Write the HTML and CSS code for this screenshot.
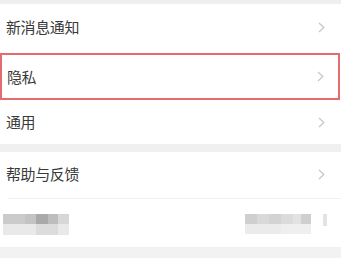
FILE: index.html
```html
<!DOCTYPE html>
<html lang="zh">
<head>
<meta charset="utf-8">
<link rel="stylesheet" href="styles.css">
</head>
<body>
<div class="page">
  <div class="gap-top"></div>
  <div class="row r1"><span class="label">新消息通知</span><svg class="chev" width="7" height="11" viewBox="0 0 7 11"><path d="M1 1 L5.8 5.5 L1 10" fill="none" stroke="#c6c6c6" stroke-width="1.2"/></svg></div>
  <div class="row r2 hl"><span class="label">隐私</span><svg class="chev" width="7" height="11" viewBox="0 0 7 11"><path d="M1 1 L5.8 5.5 L1 10" fill="none" stroke="#c6c6c6" stroke-width="1.2"/></svg></div>
  <div class="row r3"><span class="label">通用</span><svg class="chev" width="7" height="11" viewBox="0 0 7 11"><path d="M1 1 L5.8 5.5 L1 10" fill="none" stroke="#c6c6c6" stroke-width="1.2"/></svg></div>
  <div class="gap-mid"></div>
  <div class="row r4"><span class="label">帮助与反馈</span><svg class="chev" width="7" height="11" viewBox="0 0 7 11"><path d="M1 1 L5.8 5.5 L1 10" fill="none" stroke="#c6c6c6" stroke-width="1.2"/></svg></div>
  <div class="divider"></div>
  <div class="row r5">
    <div class="mosaic left">
      <div class="mrow">
        <i class="c w22 g1"></i><i class="c w11 g2"></i><i class="c w12 g3"></i><i class="c w10 g4"></i><i class="c w11 g5"></i>
      </div>
      <div class="mrow">
        <i class="c w33 l1"></i><i class="c w22 l2"></i><i class="c w11 l1"></i>
      </div>
    </div>
    <div class="right-group">
      <div class="mosaic right">
        <div class="mrow">
          <i class="c w12 g6"></i><i class="c w12 g7"></i><i class="c w12 g8"></i><i class="c w12 g9"></i><i class="c w8 g10"></i><i class="c w10 g6"></i>
        </div>
        <div class="mrow">
          <i class="c w36 l3"></i><i class="c w30 l4"></i>
        </div>
      </div>
      <div class="mini"></div>
    </div>
  </div>
  <div class="gap-bottom"></div>
</div>
</body>
</html>
```
FILE: styles.css
```css
html, body {
  margin: 0;
  padding: 0;
  background: #ffffff;
}
.page {
  width: 341px;
  height: 268px;
  overflow: hidden;
  font-family: "Noto Sans CJK SC", "Noto Sans", sans-serif;
  color: #3a3a3a;
}
.gap-top {
  height: 4px;
  background: #efefef;
}
.row {
  display: flex;
  align-items: center;
  justify-content: space-between;
  padding: 0 16px 0 6px;
  box-sizing: border-box;
  background: #fff;
}
.label {
  font-size: 15px;
  line-height: 18px;
  letter-spacing: -0.4px;
}
.chev {
  display: block;
}
.r1 { height: 48px; padding-bottom: 2px; }
.r2 { height: 47px; margin-top: 1px; }
.row.hl {
  border: 2px solid #e46c6c;
  margin-left: 0;
  margin-right: 1px;
  padding-left: 5px;
  padding-right: 14px;
}
.r3 { height: 44px; }
.gap-mid {
  height: 8px;
  background: #f0f0f0;
}
.r4 { height: 46px; padding-bottom: 2px; }
.divider {
  height: 1px;
  margin-left: 8px;
  background: #f0f0f0;
}
.r5 {
  height: 48px;
  padding: 0 14px 0 3px;
  align-items: flex-start;
  padding-top: 15px;
}
.mosaic {
  display: flex;
  flex-direction: column;
}
.mrow {
  display: flex;
  height: 10px;
}
.mrow + .mrow { height: 11px; }
.c { display: block; height: 100%; }
.w8 { width: 8px; }
.w10 { width: 10px; }
.w11 { width: 11px; }
.w12 { width: 12px; }
.w22 { width: 22px; }
.w30 { width: 30px; }
.w33 { width: 33px; }
.w36 { width: 36px; }
.g1 { background: #cbcbcb; }
.g2 { background: #c3c3c3; }
.g3 { background: #a9a9a9; }
.g4 { background: #bdbdbd; }
.g5 { background: #d7d7d7; }
.g6 { background: #cfcfcf; }
.g7 { background: #d9d9d9; }
.g8 { background: #d3d3d3; }
.g9 { background: #dbdbdb; }
.g10 { background: #e2e2e2; }
.l1 { background: #e9e9e9; }
.l2 { background: #dcdcdc; }
.l3 { background: #ebebeb; }
.l4 { background: #efefef; }
.right-group {
  display: flex;
  align-items: flex-start;
  gap: 12px;
}
.right .mrow + .mrow { height: 10px; }
.mini {
  width: 4px;
  height: 12px;
  background: #e3e3e3;
}
.gap-bottom {
  height: 11px;
  background: #f2f2f2;
}
```
